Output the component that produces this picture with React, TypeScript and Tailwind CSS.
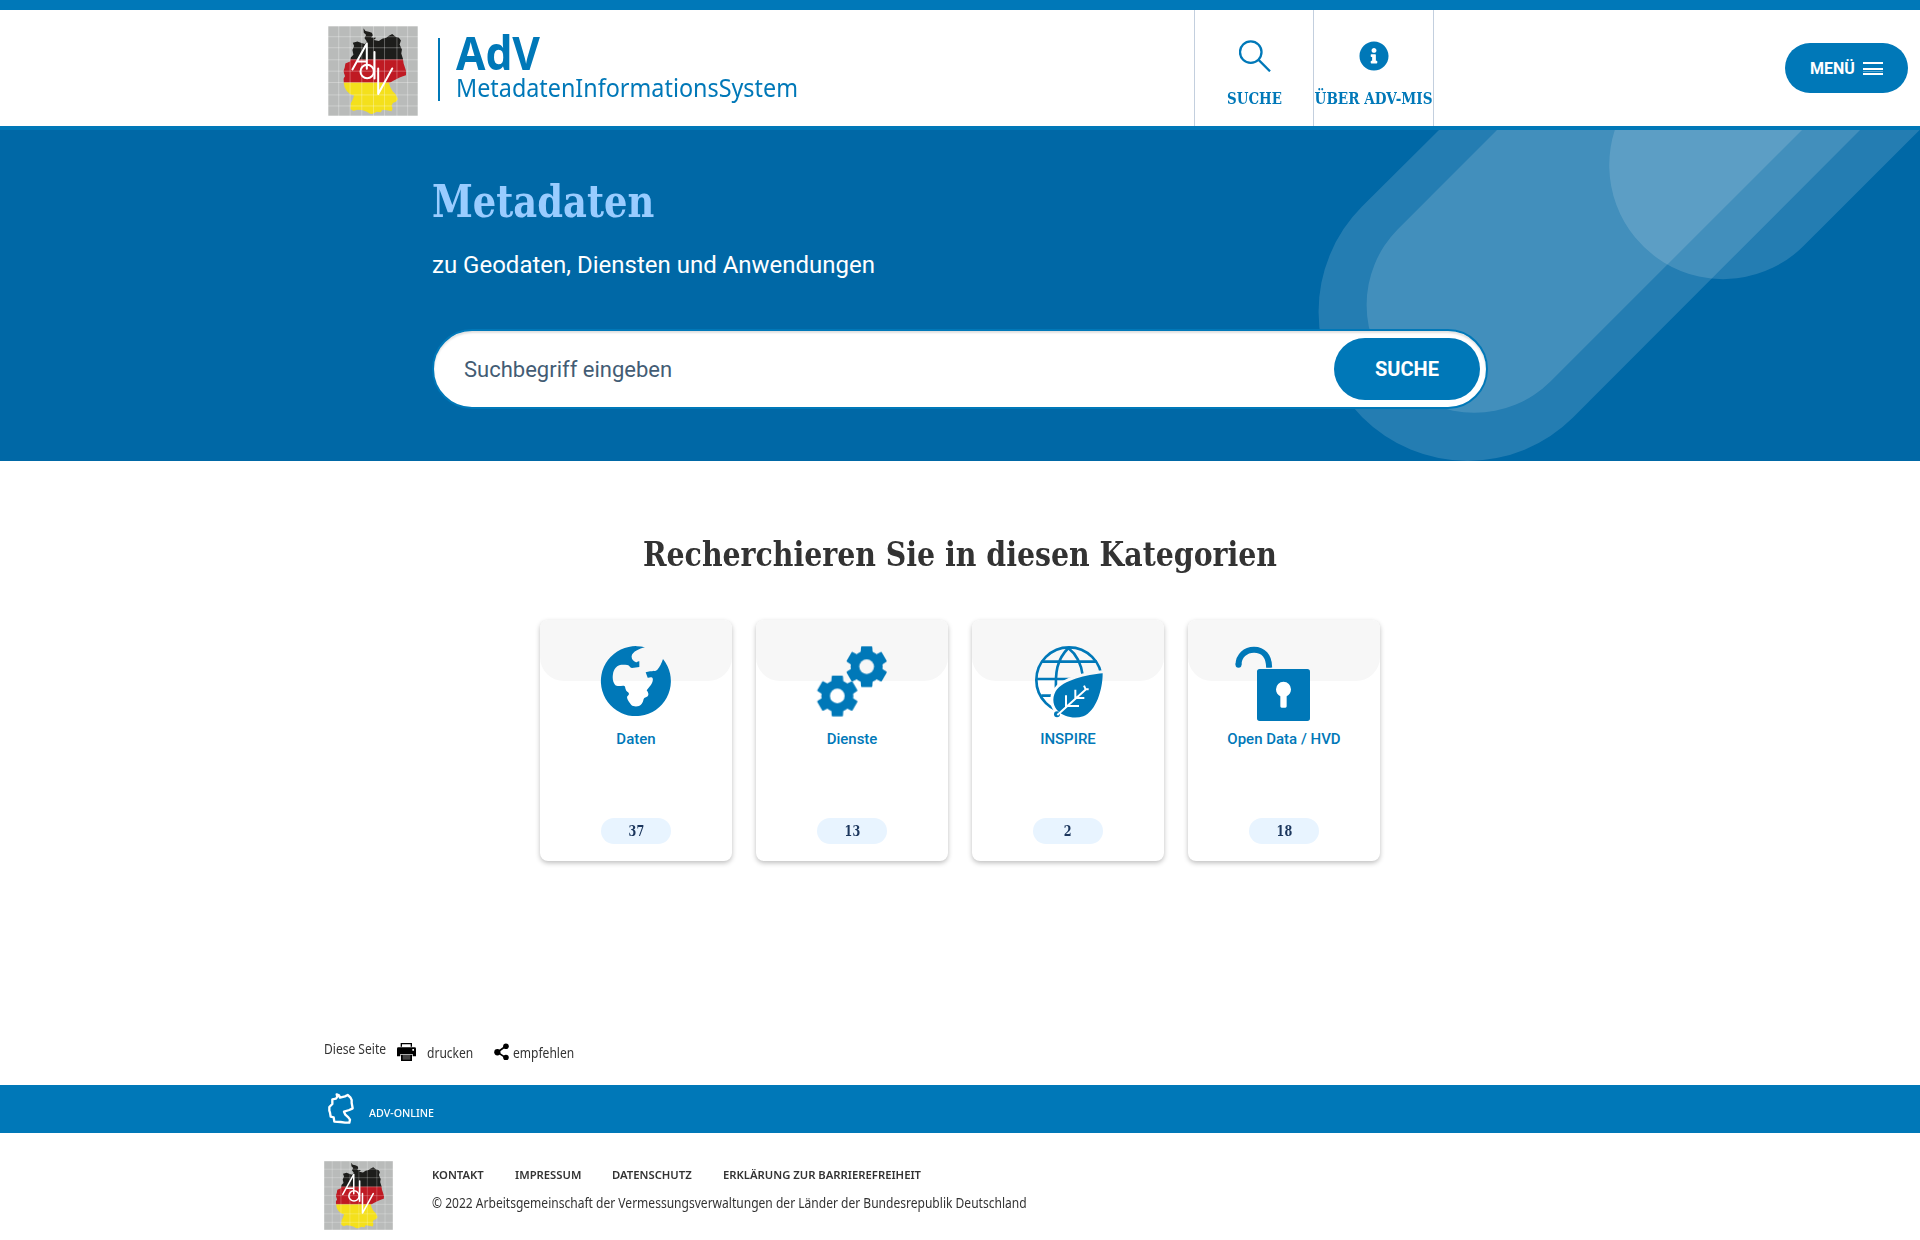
import React from 'react';
import { FaInfoCircle } from 'react-icons/fa';

const GERMANY =
  'M130 25L136 33L146 35L155 38L158 46L153 52L168 53L161 60L176 63L186 56L198 53L206 47L216 42L226 50L236 53L242 61L238 73L245 88L243 100L248 116L250 130L254 142L258 155L257 165L248 168L238 172L222 180L206 189L210 200L217 213L226 222L233 236L228 244L218 248L214 256L217 264L214 273L200 270L186 268L182 276L170 274L156 281L150 280L140 274L128 270L112 268L100 272L91 266L92 250L98 238L102 226L90 222L80 212L74 202L71 188L70 176L75 168L70 153L74 142L76 130L90 124L92 112L100 104L97 90L102 78L98 68L112 64L122 68L134 72L140 64L133 54L138 45L131 38Z';

function AdvLogo({ className }: { className: string }) {
  return (
    <svg viewBox="24 18 269 269" className={className} aria-label="AdV">
      <defs>
        <clipPath id="germany">
          <path d={GERMANY} />
        </clipPath>
      </defs>
      <rect x="24" y="18" width="269" height="269" fill="#b9bbba" />
      <g clipPath="url(#germany)">
        <rect x="24" y="18" width="269" height="101" fill="#1d1d1b" />
        <rect x="24" y="118" width="269" height="70" fill="#bf1a23" />
        <rect x="24" y="187" width="269" height="100" fill="#f4e01c" />
      </g>
      <g stroke="#fff" strokeOpacity=".36" strokeWidth="2.5">
        <path d="M25.500 18V287M56 18V287M90 18V287M125 18V287M160 18V287M193 18V287M230 18V287M262 18V287M291.500 18V287" />
        <path d="M24 19.500H293M24 50H293M24 83H293M24 119H293M24 153H293M24 187H293M24 224H293M24 257H293M24 285.500H293" />
      </g>
      <g stroke="#fff" strokeWidth="6" fill="none" strokeLinecap="round" strokeLinejoin="round">
        <path d="M97 148L140 70V146M112 124H140" />
        <circle cx="141" cy="154" r="20" />
        <path d="M163 96V175M174 145V221L216 145" />
      </g>
    </svg>
  );
}

const CARD_ICON = 'relative mt-[26px] block h-[75px] w-[192px] text-[#0078b8]';

function GlobeIcon() {
  return (
    <svg viewBox="30 138 576 225" className={CARD_ICON} fill="currentColor">
      <path d="M345 142A105 105 0 1 0 399 177C395 190 389 201 382 209C377 215 368 212 360 214L347 217L353 233C358 234 361 230 367 233C371 238 367 249 362 256L350 271C355 278 357 284 353 289C348 293 343 292 341 297C339 307 334 316 327 318C320 320 309 320 304 315C298 307 291 299 291 291C292 287 297 285 297 281C296 276 288 275 287 268C285 260 286 257 279 257C270 258 260 260 255 254C248 247 247 233 249 222C251 208 260 197 270 195C279 194 285 195 292 195C299 195 299 204 306 204L328 201V184C323 183 322 187 318 187C309 183 304 176 305 168C308 155 328 146 345 142Z" />
    </svg>
  );
}

function Gear({ x, y }: { x: number; y: number }) {
  return (
    <g transform={`translate(${x} ${y})`}>
      <circle r="48" />
      {[0, 60, 120].map((a) => (
        <path key={a} transform={`rotate(${a})`} d="M-14-61H14Q17-61 17-58L18-42V42L17 58Q17 61 14 61H-14Q-17 61-17 58L-18 42V-42L-17-58Q-17-61-14-61Z" />
      ))}
    </g>
  );
}

function GearsIcon() {
  return (
    <svg viewBox="678 138 576 225" className={CARD_ICON}>
      <mask id="gear-holes">
        <rect x="678" y="100" width="576" height="300" fill="#fff" />
        <circle cx="1010" cy="200" r="22" fill="#000" />
        <circle cx="922" cy="288" r="22" fill="#000" />
      </mask>
      <g fill="currentColor" mask="url(#gear-holes)">
        <Gear x={1010} y={200} />
        <Gear x={922} y={288} />
      </g>
    </svg>
  );
}

const LEAF = 'M428 220C382 224 308 240 287 274C274 298 281 320 294 333C310 350 342 358 370 349C408 334 428 270 428 220Z';

function InspireIcon() {
  return (
    <svg viewBox="36 138 576 225" className={CARD_ICON} fill="none" stroke="currentColor">
      <mask id="leaf-gap">
        <rect x="36" y="100" width="576" height="300" fill="#fff" stroke="none" />
        <path d={LEAF} fill="#000" stroke="#000" strokeWidth="19" />
        <path d="M286 343L400 343V400H286Z" fill="#000" stroke="none" />
      </mask>
      <g mask="url(#leaf-gap)" strokeWidth="8">
        <circle cx="327" cy="240" r="98" />
        <path d="M325 144C291 178 284 217 289 280M325 144C352 165 364 190 369 230M245 185H410M229 237H340M244 287H290" />
      </g>
      <path d={LEAF} fill="currentColor" stroke="none" />
      <circle cx="291" cy="343" r="9" fill="currentColor" stroke="none" />
      <path d="M292 345L378 268M318 286V318H357M346 269V294H373M372 257L377 268H386" stroke="#fff" strokeWidth="6" />
    </svg>
  );
}

function LockIcon() {
  return (
    <svg viewBox="684 138 576 225" className={CARD_ICON} fill="currentColor">
      <path d="M835.500 194C836 168 856 149 882 149C909 149 927 168 927.500 203" fill="none" stroke="currentColor" strokeWidth="18" />
      <circle cx="835.500" cy="194" r="9" />
      <path
        fillRule="evenodd"
        d="M899 207H1042Q1050 207 1050 215V355Q1050 363 1042 363H899Q891 363 891 355V215Q891 207 899 207ZM961 289V319Q961 323 965 323H976Q980 323 980 319V289C988 285 993 278 993 268A22.500 22.500 0 1 0 948 268C948 278 953 285 961 289Z"
      />
    </svg>
  );
}

const cards = [
  { label: 'Daten', count: 37, icon: <GlobeIcon /> },
  { label: 'Dienste', count: 13, icon: <GearsIcon /> },
  { label: 'INSPIRE', count: 2, icon: <InspireIcon /> },
  { label: 'Open Data / HVD', count: 18, icon: <LockIcon /> },
];

const SLAB = "font-['DejaVu_Serif_Condensed','DejaVu_Serif',serif] font-bold";
const SANS = "font-['Noto_Sans',sans-serif]";

function Header() {
  return (
    <header className="flex h-[130px] border-t-[10px] border-b-4 border-[#0078b8] bg-white">
      <a className="ml-[328px] flex w-[866px] shrink-0 items-start">
        <AdvLogo className="mt-4 h-[90px] w-[90px]" />
        <span className="mt-7 ml-5 h-[63px] w-0.5 bg-[#0078b8]" />
        <span className={`mt-[19px] ml-[15.500px] block text-[#0078b8] ${SANS}`}>
          <span className="block origin-left scale-x-[.925] text-[46px] leading-[46px] font-bold">AdV</span>
          <span className="-mt-1 block origin-left scale-x-[.934] text-[25px] leading-8">MetadatenInformationsSystem</span>
        </span>
      </a>
      <nav className="flex text-[#0078b8]">
        <a className="flex w-[119px] flex-col items-center border-l border-[#c3cfde]">
          <svg viewBox="177 119 98 98" className="mt-[30px] ml-0.5 h-8 w-8" fill="none" stroke="currentColor" strokeWidth="7">
            <circle cx="213" cy="156" r="33" />
            <path d="M237 180L272 215" />
          </svg>
          <span className={`mt-[17px] scale-x-[.93] text-base leading-5 whitespace-nowrap ${SLAB}`}>SUCHE</span>
        </a>
        <a className="flex w-[121px] flex-col items-center border-x border-[#c3cfde]">
          <FaInfoCircle className="mt-[31px] h-[30px] w-[30px]" />
          <span className={`mt-[18px] scale-x-[.943] text-base leading-5 whitespace-nowrap ${SLAB}`}>ÜBER ADV-MIS</span>
        </a>
      </nav>
      <button className="mt-[33px] mr-3 ml-auto flex h-[50px] w-[123px] items-center rounded-full bg-[#0078b8] pt-px pl-[25px] text-base font-bold text-white">
        MENÜ
        <svg viewBox="0 0 20 14" className="ml-2 h-3.5 w-5" stroke="currentColor">
          <path d="M0 1H20M0 7H20M0 12H20" strokeWidth="2" />
          <path d="M0 9.500H20" strokeWidth="1" strokeOpacity=".35" />
        </svg>
      </button>
    </header>
  );
}

function Hero() {
  return (
    <section className="relative h-[331px] overflow-hidden bg-[#0068a6]">
      <svg viewBox="1300 130 620 331" className="absolute top-0 right-0 h-[331px] w-[620px]" fill="#fff" fillOpacity=".14">
        <path d="M1439 130L1362 206.500A149.200 149.200 0 0 0 1573 417.500L1860 130Z" />
        <path d="M1497 130L1397.800 229.200A107.800 107.800 0 0 0 1550.200 381.700L1802 130Z" />
        <path d="M1614.800 130A114 114 0 0 0 1804 245.600L1919.600 130Z" />
      </svg>
      <div className="relative mx-auto w-[1056px] pt-11">
        <h1 className={`origin-left scale-x-[.932] text-[44px] leading-[56px] text-[#99ccff] ${SLAB}`}>Metadaten</h1>
        <p className="mt-[19px] text-2xl leading-8 text-white">zu Geodaten, Diensten und Anwendungen</p>
        <form className="mt-12 flex h-20 items-center rounded-full border-2 border-[#0078b8] bg-white pr-1.5 pl-[30px] shadow-[inset_0_2px_2px_rgba(0,0,0,0.12)]">
          <span className="grow text-[22px] text-[#435c74]">Suchbegriff eingeben</span>
          <button className="h-[62px] w-[146px] rounded-full bg-[#0078b8] text-xl font-bold text-white">SUCHE</button>
        </form>
      </div>
    </section>
  );
}

export default function App() {
  return (
    <div className="flex h-[1240px] w-[1920px] flex-col overflow-hidden bg-white font-['Roboto',sans-serif] text-[#333]">
      <Header />
      <Hero />
      <main className="h-[577px]">
        <h2 className={`mt-[70px] scale-x-[.956] text-center text-[33px] leading-[48px] text-[#333] ${SLAB}`}>
          Recherchieren Sie in diesen Kategorien
        </h2>
        <div className="mt-[41px] flex justify-center gap-6">
          {cards.map((c) => (
            <a key={c.label} className="relative flex h-[241px] w-48 flex-col items-center rounded-lg bg-white shadow-[0_2px_5px_rgba(0,0,0,0.26)]">
              <span className="absolute inset-x-0 top-0 h-[61px] rounded-t-lg rounded-b-3xl bg-[#f7f7f7]" />
              {c.icon}
              <span className="mt-2 text-[15px] leading-5 font-medium text-[#0078b8]">{c.label}</span>
              <span className="mt-[69px] flex h-[26px] w-[70px] items-center justify-center rounded-full bg-[#e8f4ff]">
                <span className={`scale-x-[.83] text-[15px] leading-5 text-[#1b365d] ${SLAB}`}>{c.count}</span>
              </span>
            </a>
          ))}
        </div>
      </main>
      <div className={`mx-auto flex h-[47px] w-[1272px] items-start pt-px text-sm leading-5 whitespace-nowrap ${SANS}`}>
        <span className="w-[73px] origin-left scale-x-[.86]">Diese Seite</span>
        <svg viewBox="261 69 57 54" className="mt-[4px] h-[18px] w-[19px]" fill="#000">
          <path d="M272 69H306V80H272ZM276 73V80H302V73ZM265 82H314Q318 82 318 86V109H308V102H271V109H261V86Q261 82 265 82ZM307 87V92H312V87Z" fillRule="evenodd" />
          <path d="M273 104H306V123H273Z" />
          <path d="M278 105H301V119H278Z" fill="#444" />
        </svg>
        <span className="mt-1 ml-[11px] w-[54px] origin-left scale-x-[.86]">drucken</span>
        <svg viewBox="553 66 45 53" className="mt-[3.500px] ml-[13px] h-[17.500px] w-[15px]" fill="#000">
          <path d="M589 75L563 94L589 111" fill="none" stroke="#000" strokeWidth="5" />
          <circle cx="589" cy="76" r="8.500" />
          <circle cx="563" cy="94" r="9.500" />
          <circle cx="589" cy="110" r="8.500" />
        </svg>
        <span className="mt-1 ml-[3.500px] origin-left scale-x-[.86]">empfehlen</span>
      </div>
      <div className="h-12 bg-[#0078b8]">
        <div className={`mx-auto flex w-[1272px] items-start text-white ${SANS}`}>
          <svg viewBox="54 219 78 93" className="mt-2 ml-1 h-[31px] w-[26px]" fill="none" stroke="#fff" strokeWidth="7" strokeLinejoin="round">
            <path d="M80 223L87 226L90 233L105 229L113 225L121 232L125 240L125 249L128 265L118 270L102 275L106 284L115 292L120 299L118 308L105 308L92 306L73 305L71 292L62 290L60 278L58 272V261L67 252V238L78 236L82 230Z" />
          </svg>
          <span className="mt-[17.500px] ml-[15px] origin-left scale-x-[.945] text-[11.300px] leading-5 font-medium">ADV-ONLINE</span>
        </div>
      </div>
      <footer className={`mx-auto flex w-[1272px] items-start pt-7 whitespace-nowrap ${SANS}`}>
        <AdvLogo className="h-[69px] w-[69px]" />
        <div className="ml-[39px] pt-[3.500px]">
          <nav className="flex text-[11.500px] leading-5 font-semibold">
            <a className="w-[83px] origin-left scale-x-[.98]">KONTAKT</a>
            <a className="w-[97px] origin-left scale-x-[.98]">IMPRESSUM</a>
            <a className="w-[111px] origin-left scale-x-[.98]">DATENSCHUTZ</a>
            <a className="origin-left scale-x-[.98]">ERKLÄRUNG ZUR BARRIEREFREIHEIT</a>
          </nav>
          <p className="mt-2 origin-left scale-x-[.86] text-sm leading-5">
            © 2022 Arbeitsgemeinschaft der Vermessungsverwaltungen der Länder der Bundesrepublik Deutschland
          </p>
        </div>
      </footer>
    </div>
  );
}
